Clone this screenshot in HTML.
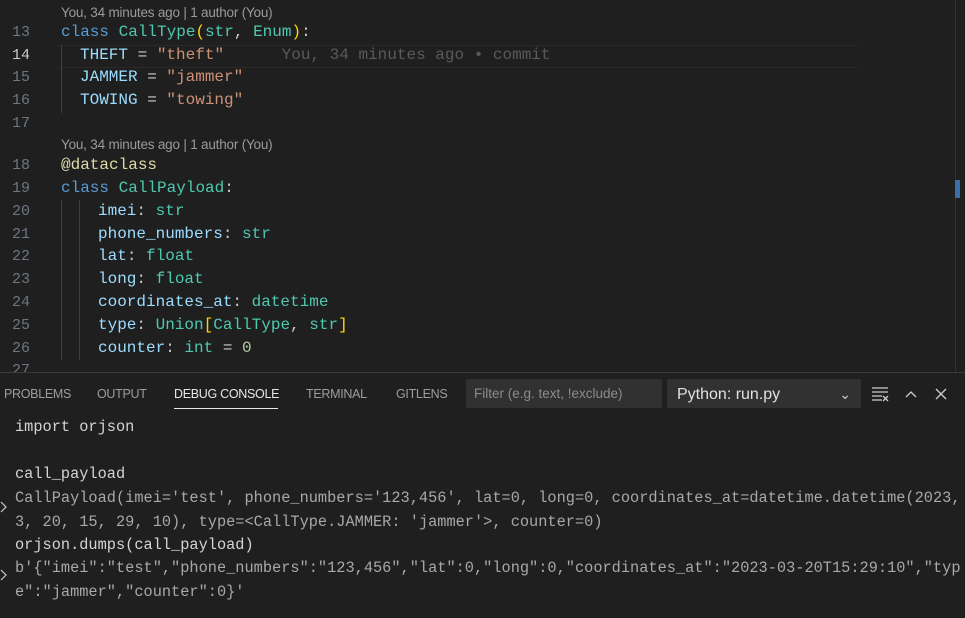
<!DOCTYPE html>
<html><head><meta charset="utf-8"><style>
body{margin:0;width:965px;height:617px;background:#1f1f1f;overflow:hidden;position:relative;font-family:"Liberation Mono",monospace;}
.ln{position:absolute;left:0;width:30px;text-align:right;color:#6e7681;font-size:15px;}
.c{position:absolute;left:61px;font-size:16px;white-space:pre;color:#cccccc;}
.lens{position:absolute;left:61px;font-family:"Liberation Sans",sans-serif;font-size:13.5px;color:#9a9a9a;letter-spacing:-0.2px}
.k{color:#569cd6}.t{color:#4ec9b0}.v{color:#9cdcfe}.s{color:#ce9178}.y{color:#ffd700}.d{color:#dcdcaa}.n{color:#b5cea8}
.g{position:absolute;width:1px;background:#404040;}
.tab{position:absolute;top:387px;font-family:"Liberation Sans",sans-serif;font-size:12.5px;color:#9d9d9d;letter-spacing:-0.3px}
.o{position:absolute;left:15px;font-size:15.3px;white-space:pre;}
</style></head><body>
<div class="lens" style="top:5px">You, 34 minutes ago | 1 author (You)</div>
<div class="ln" style="top:24px">13</div><div class="c" style="top:23px"><span class="k">class</span> <span class="t">CallType</span><span class="y">(</span><span class="t">str</span>, <span class="t">Enum</span><span class="y">)</span>:</div>
<div style="position:absolute;left:58px;top:45px;width:800px;height:21px;border-top:1px solid #2a2a2a;border-bottom:1px solid #2a2a2a"></div>
<div class="ln" style="top:47px;color:#cccccc">14</div><div class="c" style="top:46px;left:80px"><span class="v">THEFT</span> = <span class="s">"theft"</span>      <span style="color:#5a5a5a">You, 34 minutes ago • commit</span></div>
<div class="ln" style="top:69px">15</div><div class="c" style="top:68px;left:80px"><span class="v">JAMMER</span> = <span class="s">"jammer"</span></div>
<div class="ln" style="top:92px">16</div><div class="c" style="top:91px;left:80px"><span class="v">TOWING</span> = <span class="s">"towing"</span></div>
<div class="g" style="left:61px;top:45px;height:68px"></div>
<div class="ln" style="top:115px">17</div>
<div class="lens" style="top:137px">You, 34 minutes ago | 1 author (You)</div>
<div class="ln" style="top:157px">18</div><div class="c" style="top:156px"><span class="d">@dataclass</span></div>
<div class="ln" style="top:180px">19</div><div class="c" style="top:179px"><span class="k">class</span> <span class="t">CallPayload</span>:</div>
<div class="g" style="left:61px;top:200px;height:160px"></div>
<div class="g" style="left:79px;top:200px;height:160px"></div>
<div class="ln" style="top:203px">20</div><div class="c" style="left:98px;top:202px"><span class="v">imei</span>: <span class="t">str</span></div>
<div class="ln" style="top:226px">21</div><div class="c" style="left:98px;top:225px"><span class="v">phone_numbers</span>: <span class="t">str</span></div>
<div class="ln" style="top:248px">22</div><div class="c" style="left:98px;top:247px"><span class="v">lat</span>: <span class="t">float</span></div>
<div class="ln" style="top:271px">23</div><div class="c" style="left:98px;top:270px"><span class="v">long</span>: <span class="t">float</span></div>
<div class="ln" style="top:294px">24</div><div class="c" style="left:98px;top:293px"><span class="v">coordinates_at</span>: <span class="t">datetime</span></div>
<div class="ln" style="top:317px">25</div><div class="c" style="left:98px;top:316px"><span class="v">type</span>: <span class="t">Union</span><span class="y">[</span><span class="t">CallType</span>, <span class="t">str</span><span class="y">]</span></div>
<div class="ln" style="top:340px">26</div><div class="c" style="left:98px;top:339px"><span class="v">counter</span>: <span class="t">int</span> = <span class="n">0</span></div>
<div class="ln" style="top:362px">27</div>
<div style="position:absolute;left:955px;top:0;width:1px;height:372px;background:#333"></div>
<div style="position:absolute;left:955px;top:180px;width:5px;height:18px;background:#3a6ea5"></div>
<div style="position:absolute;left:0;top:372px;width:965px;height:245px;background:#1f1f1f;border-top:1px solid #3a3a3a"></div>
<div class="tab" style="left:4px">PROBLEMS</div>
<div class="tab" style="left:97px">OUTPUT</div>
<div class="tab" style="left:174px;color:#e7e7e7">DEBUG CONSOLE</div>
<div style="position:absolute;left:174px;top:408px;width:104px;height:1px;background:#e7e7e7"></div>
<div class="tab" style="left:306px">TERMINAL</div>
<div class="tab" style="left:396px">GITLENS</div>
<div style="position:absolute;left:466px;top:379px;width:196px;height:29px;background:#313131;border-radius:2px;font-family:'Liberation Sans',sans-serif;font-size:13.5px;color:#8b8b8b;line-height:30px;padding-left:8px;box-sizing:border-box">Filter (e.g. text, !exclude)</div>
<div style="position:absolute;left:667px;top:379px;width:194px;height:29px;background:#313131;border-radius:2px;font-family:'Liberation Sans',sans-serif;font-size:16px;color:#e0e0e0;line-height:31px;padding-left:10px;box-sizing:border-box">Python: run.py<span style="position:absolute;right:10px;top:0;font-size:14px;color:#ccc">&#8964;</span></div>
<svg style="position:absolute;left:870px;top:384px" width="80" height="20" viewBox="0 0 80 20" fill="none" stroke="#cccccc" stroke-width="1.3"><path d="M2 4h16M2 8h16M2 12h10M2 16h10M13 12l5 5M18 12l-5 5"/><path d="M36 13l5-5 5 5"/><path d="M66 5l10 10M76 5l-10 10"/></svg>
<div class="o" style="top:418px;color:#d4d4d4">import orjson</div>
<div class="o" style="top:465px;color:#d4d4d4">call_payload</div>
<div class="o" style="top:489px;color:#a8a8a8">CallPayload(imei='test', phone_numbers='123,456', lat=0, long=0, coordinates_at=datetime.datetime(2023,</div>
<div class="o" style="top:513px;color:#a8a8a8">3, 20, 15, 29, 10), type=&lt;CallType.JAMMER: 'jammer'&gt;, counter=0)</div>
<div class="o" style="top:536px;color:#d4d4d4">orjson.dumps(call_payload)</div>
<div class="o" style="top:559px;color:#a8a8a8">b'{"imei":"test","phone_numbers":"123,456","lat":0,"long":0,"coordinates_at":"2023-03-20T15:29:10","typ</div>
<div class="o" style="top:583px;color:#a8a8a8">e":"jammer","counter":0}'</div>
<svg style="position:absolute;left:0;top:500px" width="8" height="100" fill="none" stroke="#cccccc" stroke-width="1.2"><path d="M1 2l5 5-5 5M1 70l5 5-5 5"/></svg>
</body></html>
